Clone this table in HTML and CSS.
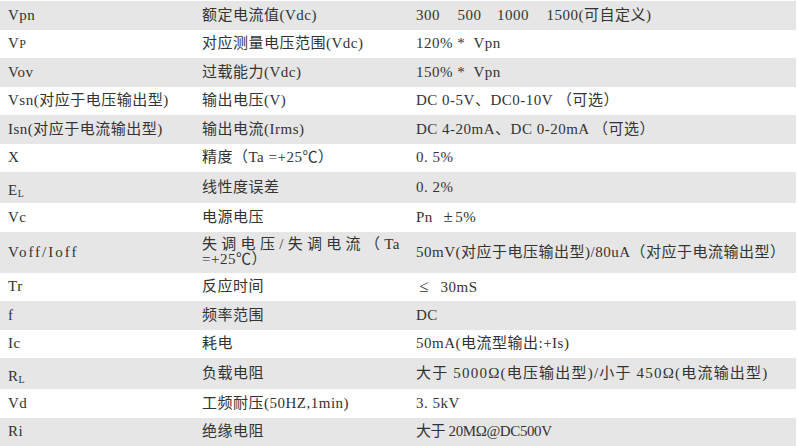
FILE: index.html
```
<!DOCTYPE html>
<html lang="zh-CN">
<head>
<meta charset="utf-8">
<title>参数表</title>
<link rel="stylesheet" href="styles.css">
</head>
<body>
<table class="spec">
  <colgroup>
    <col class="c1">
    <col class="c2">
    <col class="c3">
  </colgroup>
  <tbody>
    <tr><td>Vpn</td><td>额定电流值(Vdc)</td><td><span class="gap-a">300</span><span class="gap-b">500</span><span class="gap-a">1000</span>1500(可自定义)</td></tr>
    <tr><td>V<span class="sc">P</span></td><td>对应测量电压范围(Vdc)</td><td class="pre">120% *  Vpn</td></tr>
    <tr><td>Vov</td><td>过载能力(Vdc)</td><td class="pre">150% *  Vpn</td></tr>
    <tr><td>Vsn(对应于电压输出型)</td><td>输出电压(V)</td><td class="pre">DC 0-5V、DC0-10V （可选）</td></tr>
    <tr><td>Isn(对应于电流输出型)</td><td>输出电流(Irms)</td><td class="pre">DC 4-20mA、DC 0-20mA （可选）</td></tr>
    <tr><td>X</td><td>精度（Ta =+25℃）</td><td class="pre">0. 5%</td></tr>
    <tr class="tall"><td class="subcell">E<sub>L</sub></td><td>线性度误差</td><td class="pre">0. 2%</td></tr>
    <tr><td>Vc</td><td>电源电压</td><td class="pre">Pn  <span class="pm">±</span>5%</td></tr>
    <tr><td class="wide">Voff/Ioff</td><td class="just">失调电压/失调电流（Ta =+25℃）</td><td>50mV(对应于电压输出型)/80uA（对应于电流输出型）</td></tr>
    <tr><td>Tr</td><td>反应时间</td><td class="pre"><span class="le">≤</span>  30mS</td></tr>
    <tr><td>f</td><td>频率范围</td><td>DC</td></tr>
    <tr><td>Ic</td><td>耗电</td><td>50mA(电流型输出:+Is)</td></tr>
    <tr class="tall"><td class="subcell">R<sub>L</sub></td><td>负载电阻</td><td class="loose">大于 5000Ω(电压输出型)/小于 450Ω(电流输出型)</td></tr>
    <tr><td>Vd</td><td>工频耐压(50HZ,1min)</td><td class="pre">3. 5kV</td></tr>
    <tr><td>Ri</td><td>绝缘电阻</td><td class="tight">大于 20MΩ@DC500V</td></tr>
  </tbody>
</table>
</body>
</html>
```
FILE: styles.css
```
html, body {
  margin: 0;
  padding: 0;
  background: #ffffff;
}

body {
  padding-top: 1px;
  font-family: "Liberation Serif", "Noto Sans CJK SC", serif;
  font-size: 15px;
  line-height: 15px;
  color: #333333;
}

.spec {
  width: 796px;
  border-collapse: collapse;
  border-spacing: 0;
  table-layout: fixed;
  letter-spacing: 0.5px;
}

.c1 { width: 194px; }
.c2 { width: 214px; }
.c3 { width: 388px; }

.spec tr {
  height: 28.5px;
}

.spec tr:nth-child(odd) {
  background: #e6e6e6;
}

.spec tr.tall {
  height: 31px;
}

.spec td {
  padding: 5.5px 8px;
  vertical-align: middle;
  white-space: nowrap;
}

.spec td.pre {
  white-space: pre;
}

.spec td.just {
  white-space: normal;
  text-align: justify;
}

.spec td.wide {
  letter-spacing: 2px;
}

.spec td.loose {
  letter-spacing: 1.2px;
}

.spec td.tight {
  letter-spacing: -0.4px;
}

.spec td.subcell {
  vertical-align: top;
  padding-top: 11px;
  padding-bottom: 0;
}

.spec sub {
  font-size: 10px;
  line-height: 15px;
  vertical-align: -2px;
}

.sc {
  font-size: 12px;
}

.gap-a {
  margin-right: 17.5px;
}

.gap-b {
  margin-right: 15.5px;
}

.pm {
  display: inline-block;
  width: 14px;
  text-align: center;
  font-size: 17px;
  line-height: 15px;
}

.le {
  display: inline-block;
  width: 16px;
  text-align: center;
  font-size: 17px;
  line-height: 15px;
}
```
